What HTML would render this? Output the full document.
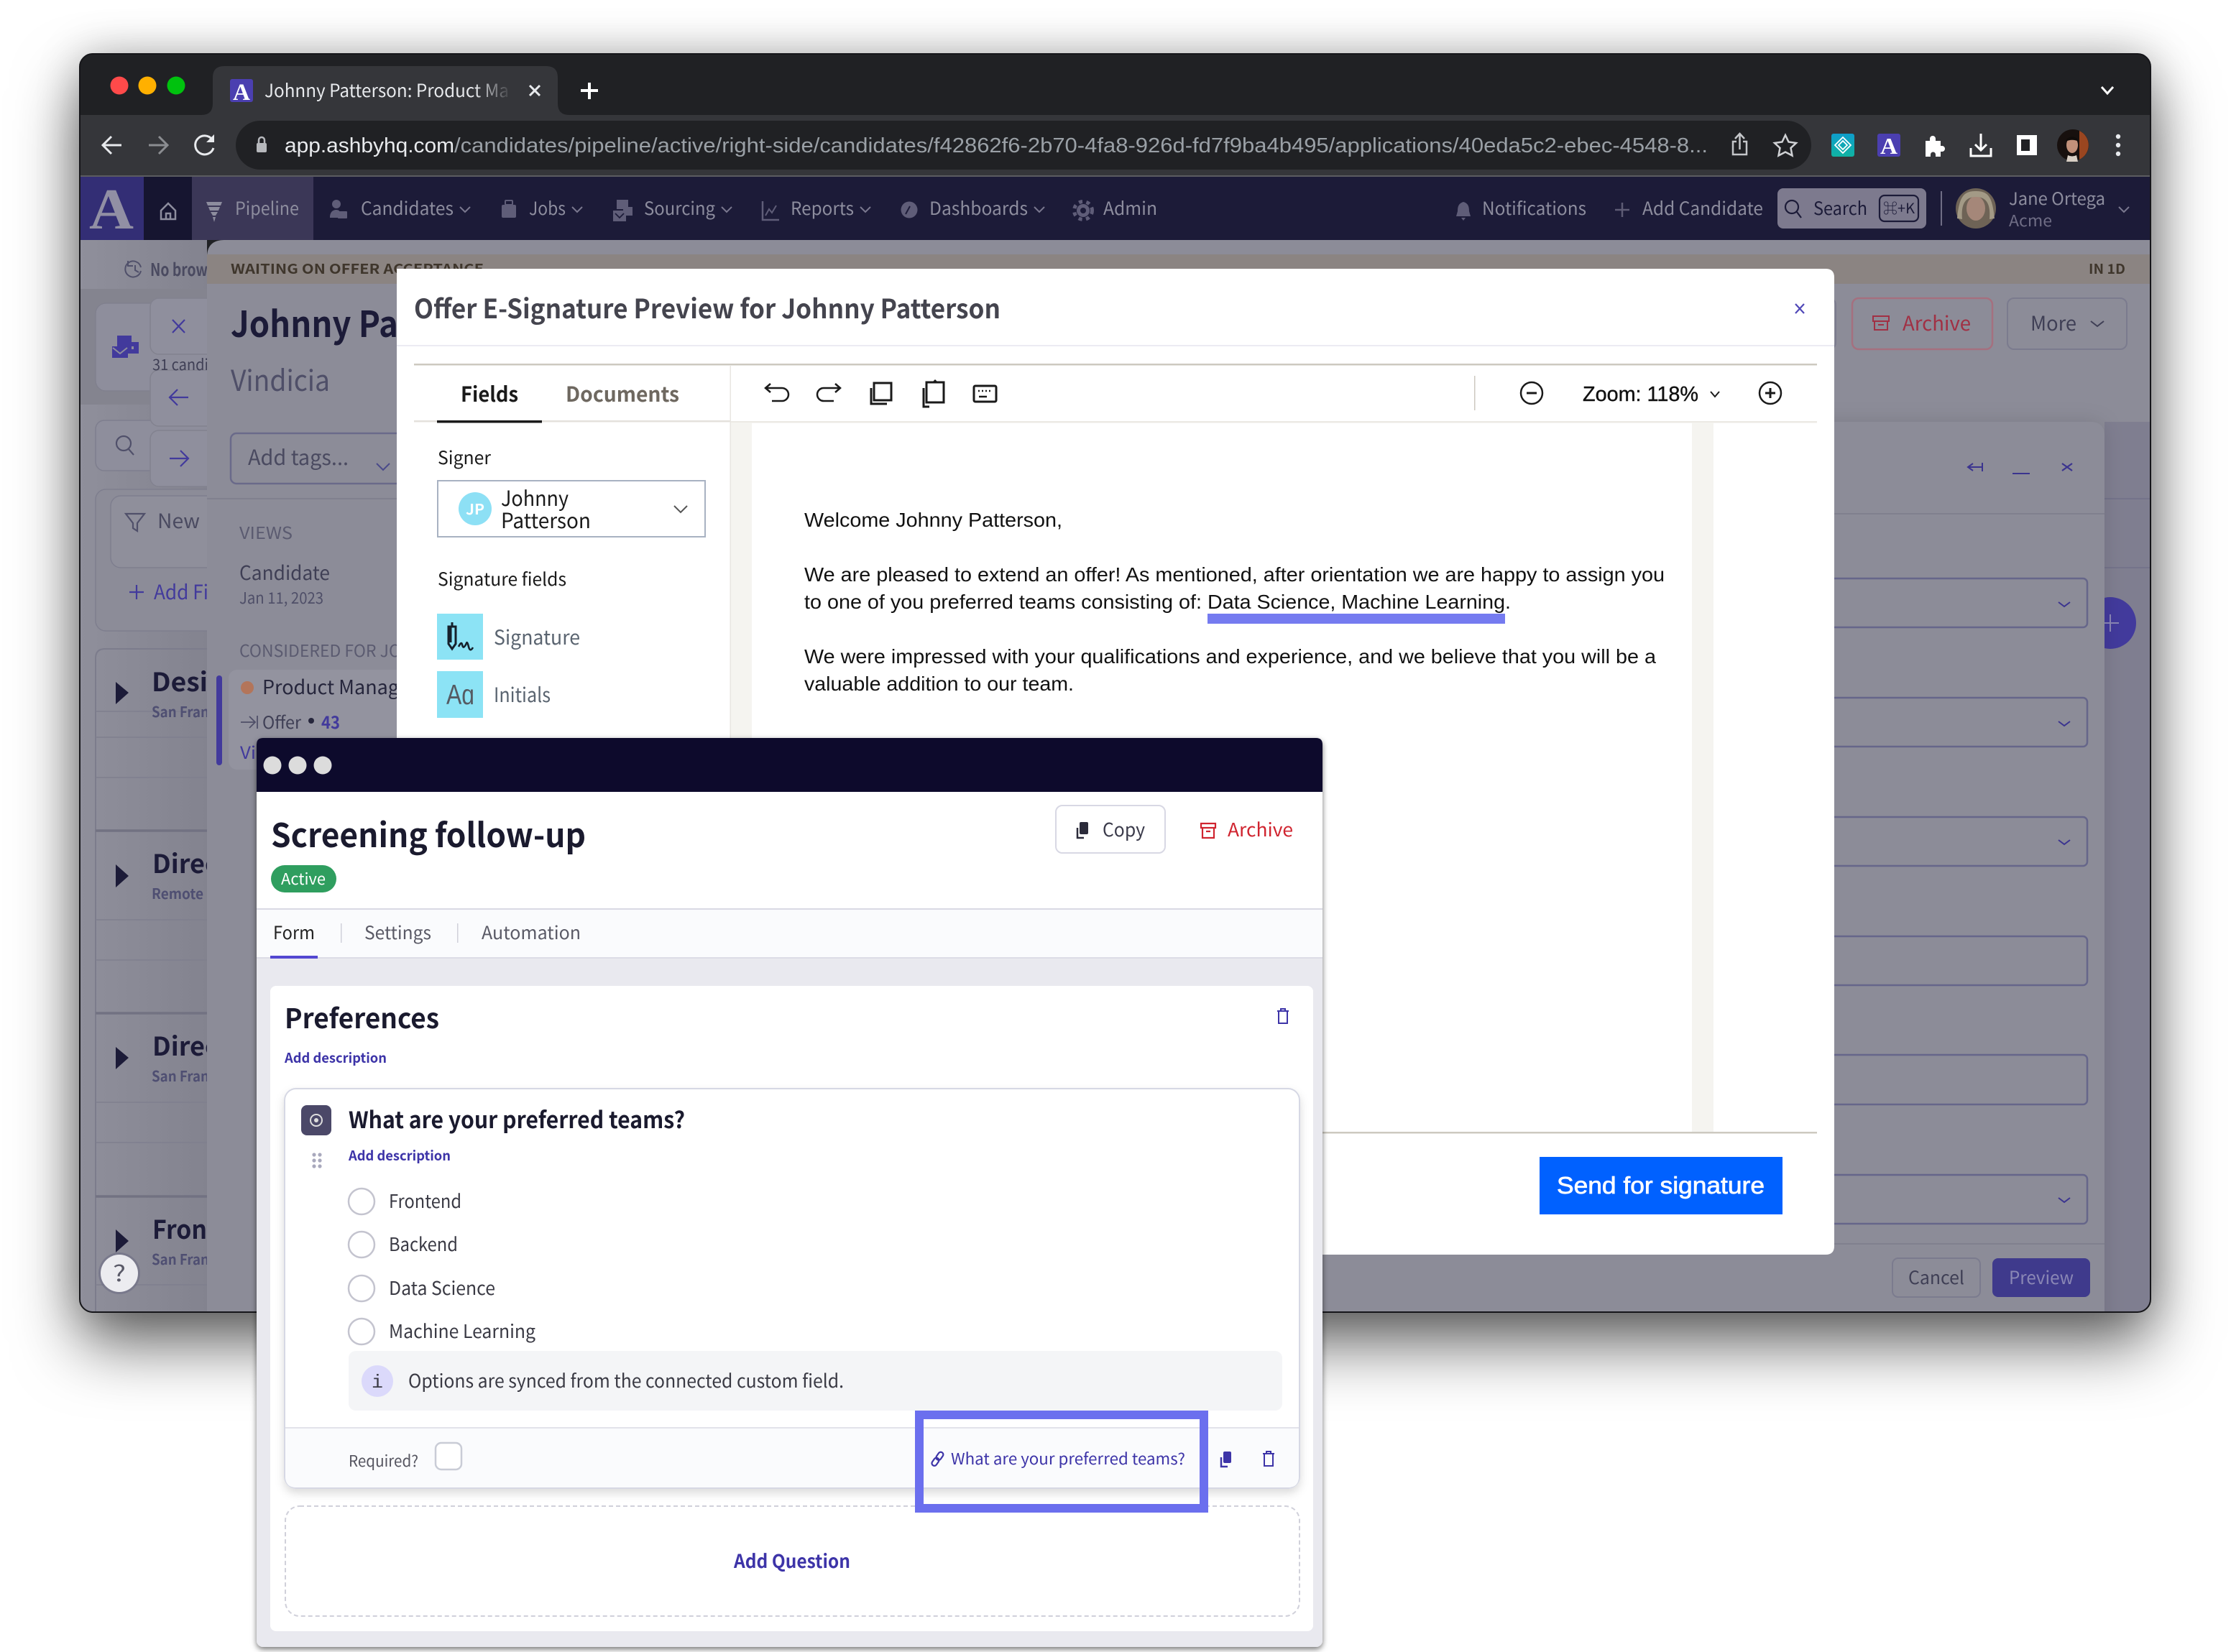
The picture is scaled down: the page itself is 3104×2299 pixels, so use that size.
<!DOCTYPE html>
<html lang="en"><head><meta charset="utf-8"><title>Ashby</title>
<style>
html,body{margin:0;padding:0;background:#fff}
body{width:3104px;height:2299px;position:relative;overflow:hidden}
#sh{position:absolute;left:111px;top:75px;width:2881px;height:1751px;border-radius:18px;box-shadow:0 44px 90px rgba(0,0,0,.6),0 0 60px rgba(0,0,0,.22)}
svg{position:absolute;left:0;top:0}
text{font-family:"Noto Sans CJK JP","Liberation Sans",sans-serif;white-space:pre}
.l{font-family:"Liberation Sans",sans-serif}
.s{font-family:"Liberation Serif",serif;font-weight:700}
.b{font-weight:700}
</style></head><body>
<div id="sh"></div>
<svg width="3104" height="2299" viewBox="0 0 3104 2299" xmlns="http://www.w3.org/2000/svg">
<defs>
<clipPath id="w"><rect x="111" y="75" width="2881" height="1751" rx="18"/></clipPath>
<linearGradient id="fade" gradientUnits="userSpaceOnUse" x1="660" y1="0" x2="712" y2="0"><stop offset="0" stop-color="#e8eaed"/><stop offset="1" stop-color="#35363a"/></linearGradient>
<linearGradient id="side" x1="0" y1="0" x2="1" y2="0"><stop offset="0" stop-color="#8f8f9b"/><stop offset="1" stop-color="#83838f"/></linearGradient>
<linearGradient id="teal" x1="0" y1="0" x2="0" y2="1"><stop offset="0" stop-color="#0f9dcb"/><stop offset="1" stop-color="#10b3a2"/></linearGradient>
<filter id="fs" x="-5%" y="-5%" width="110%" height="110%"><feDropShadow dx="0" dy="3" stdDeviation="4" flood-color="#000" flood-opacity=".55"/></filter>
<filter id="qs" x="-5%" y="-5%" width="110%" height="115%"><feDropShadow dx="0" dy="6" stdDeviation="6" flood-color="#000" flood-opacity=".14"/></filter>
<filter id="ps" x="-10%" y="-5%" width="120%" height="110%"><feDropShadow dx="0" dy="0" stdDeviation="14" flood-color="#000" flood-opacity=".12"/></filter>
</defs>

<g clip-path="url(#w)">
<rect x="111" y="75" width="2881" height="1751" fill="#202124"/>
<!-- tab -->
<path d="M280 160q16 0 16-16V108q0-16 16-16H760q16 0 16 16V144q0 16 16 16Z" fill="#35363a"/>
<circle cx="166" cy="119" r="12.5" fill="#ff4a4a"/><circle cx="205" cy="119" r="12.5" fill="#ffb000"/><circle cx="245" cy="119" r="12.5" fill="#00c20e"/>
<rect x="320" y="110" width="32" height="32" rx="3" fill="#4b3fb0"/>
<text class="s" x="324" y="139" font-size="33" textLength="24" lengthAdjust="spacingAndGlyphs" fill="#fff">A</text>
<text x="368" y="135" font-size="25" textLength="340" lengthAdjust="spacingAndGlyphs" fill="url(#fade)">Johnny Patterson: Product Ma</text>
<path d="M737 119l14 14M751 119l-14 14" stroke="#e8eaed" stroke-width="3" fill="none"/>
<path d="M820 115v23M808 126h24" stroke="#fff" stroke-width="4" fill="none"/>
<path d="M2924 121l8 9 8-9" stroke="#fff" stroke-width="3" fill="none"/>
<!-- toolbar -->
<rect x="111" y="160" width="2881" height="84" fill="#35363a"/>
<rect x="111" y="244" width="2881" height="2" fill="#5b5c60"/>
<rect x="328" y="168" width="2192" height="68" rx="34" fill="#202124"/>
<path d="M169 202H143M155 190l-12 12 12 12" stroke="#e8eaed" stroke-width="3" fill="none"/>
<path d="M207 202h26M221 190l12 12-12 12" stroke="#8b8d91" stroke-width="3" fill="none"/>
<path d="M295 194a13 13 0 1 0 2 12" stroke="#e8eaed" stroke-width="3" fill="none"/><path d="M298 187v11h-11z" fill="#e8eaed"/>
<rect x="357" y="199" width="14" height="13" rx="2" fill="#b6b8bc"/><path d="M360 199v-4a4 4 0 0 1 8 0v4" stroke="#b6b8bc" stroke-width="2.5" fill="none"/>
<text class="l" x="396" y="212" font-size="29" textLength="236" lengthAdjust="spacingAndGlyphs" fill="#e8eaed">app.ashbyhq.com</text>
<text class="l" x="632" y="212" font-size="29" textLength="1744" lengthAdjust="spacingAndGlyphs" fill="#9aa0a6">/candidates/pipeline/active/right-side/candidates/f42862f6-2b70-4fa8-926d-fd7f9ba4b495/applications/40eda5c2-ebec-4548-8...</text>
<path d="M2416 197h-5v18h19v-18h-5M2420.500 208v-21M2414 193l6.500-7 6.500 7" stroke="#c4c6c9" stroke-width="2.500" fill="none"/>
<path d="M2484 188l4.500 9.500 10.500 1.500-7.500 7 2 10.500-9.500-5-9.500 5 2-10.500-7.500-7 10.500-1.500z" stroke="#d0d2d5" stroke-width="2.500" fill="none"/>
<rect x="2548" y="186" width="32" height="32" rx="3" fill="url(#teal)"/><path d="M2564 191l11 11-11 11-11-11z M2564 196l6 6-6 6-6-6z" stroke="#fff" stroke-width="1.800" fill="none"/>
<rect x="2612" y="186" width="32" height="32" rx="3" fill="#4b3fb0"/><text class="s" x="2616" y="214" font-size="32" textLength="24" lengthAdjust="spacingAndGlyphs" fill="#fff">A</text>
<path d="M2679 196h6v-3a4 4 0 0 1 8 0v3h7v7h2a4 4 0 0 1 0 8h-2v7h-7v-3a3.500 3.500 0 0 0-7 0v3h-7z" fill="#fff"/>
<path d="M2756 186v22M2748 201l8 8 8-8M2742 206v11h28v-11" stroke="#fff" stroke-width="3" fill="none"/>
<rect x="2806" y="188" width="28" height="28" fill="#fff"/><rect x="2812" y="194" width="12" height="16" fill="#202124"/>
<circle cx="2884" cy="202" r="22" fill="#17100e"/><path d="M2893 182a22 22 0 0 1 0 40z" fill="#9a4620"/><ellipse cx="2883" cy="202" rx="8" ry="11" fill="#c2917a"/><path d="M2874 197c2-9 16-9 18 0-5-3-13-3-18 0z" fill="#100c0a"/><path d="M2877 216q6 3 12 0l2 9h-16z" fill="#d8cfc4"/>
<circle cx="2947" cy="190" r="3.200" fill="#e8eaed"/><circle cx="2947" cy="202" r="3.200" fill="#e8eaed"/><circle cx="2947" cy="214" r="3.200" fill="#e8eaed"/>

<!-- nav -->
<rect x="111" y="246" width="2881" height="88" fill="#1c1b38"/>
<rect x="111" y="246" width="89" height="88" fill="#332e75"/>
<rect x="200" y="246" width="67" height="88" fill="#161530"/>
<rect x="267" y="246" width="169" height="88" fill="#3b3757"/>
<text class="s" x="124" y="318" font-size="80" textLength="62" lengthAdjust="spacingAndGlyphs" fill="#918fa4">A</text>
<path d="M224 293l10-10 10 10v12h-20zM231 305v-8h6v8" stroke="#8d8d9e" stroke-width="2.500" fill="none"/>
<path d="M287 281h22l-2 5h-18zM290 288h16l-2 5h-12zM293 295h10l-3 5h-4zM296 302h4l-2 7z" fill="#8d8d9e"/>
<g fill="#5f5d78">
<circle cx="468" cy="284" r="6"/><path d="M459 303c0-8 4-11 9-11 2 0 3 1 4 1v10z"/><rect x="470" y="294" width="13" height="10" rx="1"/>
<rect x="698" y="285" width="20" height="18" rx="2"/><rect x="703" y="279" width="10" height="6" rx="1" fill="none" stroke="#5f5d78" stroke-width="2"/>
<rect x="858" y="278" width="16" height="13"/><rect x="867" y="288" width="13" height="12"/><path d="M853 293h18v15h-18z"/>
<path d="M1061 280v26h23" fill="none" stroke="#5f5d78" stroke-width="2.500"/><path d="M1065 300l5-9 4 5 6-10" fill="none" stroke="#5f5d78" stroke-width="2"/>
<circle cx="1265" cy="292" r="11.500"/>
<circle cx="1507" cy="293" r="9"/><circle cx="1507" cy="293" r="12.500" fill="none" stroke="#5f5d78" stroke-width="5" stroke-dasharray="5 5.500"/>
<path d="M2036 281c-7 2-8 7-8 13l-2 7h20l-2-7c0-6-1-11-8-13zM2033 303h6l-3 4z"/>
</g>
<path d="M856 297l6 6 6-6" stroke="#1c1b38" stroke-width="1.800" fill="none"/>
<path d="M2257 282v20M2247 292h20" stroke="#5e5c75" stroke-width="2.500"/>
<path d="M1260 298l6-11" stroke="#1c1b38" stroke-width="2"/>
<circle cx="1507" cy="293" r="4" fill="#1c1b38"/>
<g fill="#8d8d9e" font-size="25">
<text x="327" y="299" textLength="89" lengthAdjust="spacingAndGlyphs">Pipeline</text>
<text x="502" y="299" textLength="129" lengthAdjust="spacingAndGlyphs">Candidates</text>
<text x="736" y="299" textLength="51" lengthAdjust="spacingAndGlyphs">Jobs</text>
<text x="896" y="299" textLength="99" lengthAdjust="spacingAndGlyphs">Sourcing</text>
<text x="1100" y="299" textLength="88" lengthAdjust="spacingAndGlyphs">Reports</text>
<text x="1293" y="299" textLength="137" lengthAdjust="spacingAndGlyphs">Dashboards</text>
<text x="1535" y="299" textLength="75" lengthAdjust="spacingAndGlyphs">Admin</text>
<text x="2062" y="299" textLength="145" lengthAdjust="spacingAndGlyphs">Notifications</text>
<text x="2285" y="299" textLength="168" lengthAdjust="spacingAndGlyphs">Add Candidate</text>
<text x="2795" y="285" font-size="24" textLength="134" lengthAdjust="spacingAndGlyphs">Jane Ortega</text>
<text x="2795" y="315" font-size="22" textLength="60" lengthAdjust="spacingAndGlyphs" fill="#6f6d85">Acme</text>
</g>
<g stroke="#7a788f" stroke-width="2" fill="none">
<path d="M640 288l7 7 7-7M796 288l7 7 7-7M1004 288l7 7 7-7M1197 288l7 7 7-7M1439 288l7 7 7-7M2948 288l7 7 7-7"/>
</g>
<rect x="2473" y="262" width="207" height="56" rx="8" fill="#7d7a8e"/>
<circle cx="2493" cy="288" r="9" stroke="#1c1b38" stroke-width="2.200" fill="none"/><path d="M2500 295l6 8" stroke="#1c1b38" stroke-width="2.200"/>
<text x="2523" y="299" font-size="25" textLength="75" lengthAdjust="spacingAndGlyphs" fill="#1c1b38">Search</text>
<rect x="2615" y="272" width="54" height="36" rx="7" fill="none" stroke="#1c1b38" stroke-width="2.200"/>
<text x="2620" y="297" font-size="20" textLength="44" lengthAdjust="spacingAndGlyphs" fill="#1c1b38">⌘+K</text>
<rect x="2700" y="266" width="2" height="48" fill="#6f6d85"/>
<ellipse cx="2749" cy="290" rx="28" ry="28" fill="#6e6356"/><ellipse cx="2749" cy="290" rx="13" ry="17" fill="#a58779"/><path d="M2723 304c3-32 10-38 26-38s23 6 26 38l-7 1c2-22-5-31-19-31s-21 9-19 31z" fill="#a39a86"/>

<!-- page bg -->
<rect x="111" y="334" width="177" height="1492" fill="url(#side)"/>
<rect x="111" y="402" width="177" height="161" fill="#84848f"/>
<path d="M196 372a11 11 0 1 0 0 5M178 363v7h7M188 369v7l5 3" stroke="#50506a" stroke-width="2" fill="none"/>
<text x="209" y="384" font-size="24" font-weight="700" textLength="80" lengthAdjust="spacingAndGlyphs" fill="#4a4a60">No brow</text>
<rect x="133" y="422" width="200" height="122" rx="14" fill="#8e8e9c" stroke="#80808e" stroke-width="1.500"/>
<g fill="#423a9c"><rect x="163" y="467" width="20" height="15"/><rect x="175" y="476" width="18" height="16"/><path d="M156 482h22v16h-22z"/></g>
<path d="M157 484l10 8 10-8" stroke="#8e8e9c" stroke-width="2" fill="none"/><rect x="183" y="482" width="3" height="4" fill="#8e8e9c"/>
<rect x="133" y="585" width="200" height="70" rx="12" fill="#8e8e9c" stroke="#7e7e8e" stroke-width="1.500"/>
<circle cx="172" cy="617" r="10" stroke="#50506a" stroke-width="2.200" fill="none"/><path d="M179 625l7 8" stroke="#50506a" stroke-width="2.200"/>
<rect x="209" y="415" width="200" height="78" rx="12" fill="#8f8f9d" stroke="#82828f" stroke-width="1.500"/>
<rect x="209" y="515" width="200" height="78" rx="12" fill="#8f8f9d" stroke="#82828f" stroke-width="1.500"/>
<rect x="209" y="599" width="200" height="78" rx="12" fill="#8f8f9d" stroke="#82828f" stroke-width="1.500"/>
<path d="M240 445l17 18M257 445l-17 18" stroke="#423a9c" stroke-width="2.200"/>
<path d="M262 553h-26M247 542l-11 11 11 11M236 638h26M251 627l11 11-11 11" stroke="#423a9c" stroke-width="2.200" fill="none"/>
<text x="212" y="515" font-size="21" textLength="78" lengthAdjust="spacingAndGlyphs" fill="#3f3f55">31 candi</text>
<rect x="133" y="681" width="200" height="197" rx="14" fill="#8c8c98" stroke="#7e7e8e" stroke-width="1.500"/>
<rect x="154" y="690" width="200" height="100" rx="14" fill="#8f8f9b" stroke="#7e7e8e" stroke-width="1.500"/>
<path d="M175 715h26l-10 13v11l-6-4v-7z" stroke="#50506a" stroke-width="2.200" fill="none"/>
<text x="219" y="735" font-size="28" textLength="59" lengthAdjust="spacingAndGlyphs" fill="#4a4a60">New</text>
<path d="M190 814v20M180 824h20" stroke="#423a9c" stroke-width="2.200"/>
<text x="214" y="834" font-size="28" textLength="76" lengthAdjust="spacingAndGlyphs" fill="#423a9c">Add Fi</text>
<path d="M133 1826V916q0-13 13-13H288" fill="none" stroke="#7c7c8c" stroke-width="2"/>
<g stroke="#7f7f8e" stroke-width="1.500">
<path d="M133 990H288M133 1026H288M133 1082H288M133 1280H288M133 1336H288M133 1534H288M133 1590H288M133 1788H288"/>
</g>
<g stroke="#727282" stroke-width="3.500"><path d="M133 1156H288M133 1410H288M133 1665H288"/></g>
<g fill="#1c1b38">
<path d="M161 949l18 15-18 16zM161 1203l18 16-18 16zM161 1457l18 15-18 16zM161 1711l18 16-18 16z"/>
</g>
<g fill="#1c1b38" font-size="36" font-weight="700">
<text x="211" y="962" textLength="78" lengthAdjust="spacingAndGlyphs">Desi</text>
<text x="212" y="1215" textLength="92" lengthAdjust="spacingAndGlyphs">Direc</text>
<text x="212" y="1469" textLength="92" lengthAdjust="spacingAndGlyphs">Direc</text>
<text x="212" y="1724" textLength="76" lengthAdjust="spacingAndGlyphs">Fron</text>
</g>
<g fill="#4f4f72" font-size="20" font-weight="700">
<text x="211" y="998" textLength="80" lengthAdjust="spacingAndGlyphs">San Fran</text>
<text x="211" y="1251" textLength="72" lengthAdjust="spacingAndGlyphs">Remote</text>
<text x="211" y="1505" textLength="80" lengthAdjust="spacingAndGlyphs">San Fran</text>
<text x="211" y="1760" textLength="80" lengthAdjust="spacingAndGlyphs">San Fran</text>
</g>
<circle cx="166" cy="1772" r="29" fill="#6c6c84" opacity=".55"/>
<circle cx="166" cy="1772" r="26" fill="#ececf0"/>
<text x="157" y="1783" font-size="31" textLength="18" lengthAdjust="spacingAndGlyphs" fill="#5a5a68">?</text>

<!-- panel 2 -->
<path d="M288 1826V358q0-24 24-24H2992V1826Z" fill="#8c8c98"/>
<rect x="288" y="354" width="2704" height="41" fill="#8b8482"/>
<text x="321" y="381" font-size="19" font-weight="700" textLength="352" lengthAdjust="spacingAndGlyphs" fill="#3f362c">WAITING ON OFFER ACCEPTANCE</text>
<text x="2906" y="381" font-size="19" font-weight="700" textLength="51" lengthAdjust="spacingAndGlyphs" fill="#3f362c">IN 1D</text>
<text x="321" y="469" font-size="50" font-weight="700" textLength="233" lengthAdjust="spacingAndGlyphs" fill="#1c1b38">Johnny Pa</text>
<text x="321" y="544" font-size="40" textLength="138" lengthAdjust="spacingAndGlyphs" fill="#4f4f68">Vindicia</text>
<rect x="321" y="603" width="260" height="70" rx="8" fill="none" stroke="#6a6a8a" stroke-width="2.500"/>
<text x="345" y="647" font-size="29" textLength="140" lengthAdjust="spacingAndGlyphs" fill="#4a4a60">Add tags...</text>
<path d="M524 645l9 9 9-9" stroke="#4a4a8a" stroke-width="2" fill="none"/>
<rect x="288" y="693" width="270" height="2" fill="#80808e"/>
<text x="333" y="750" font-size="23" textLength="74" lengthAdjust="spacingAndGlyphs" fill="#5b5b70">VIEWS</text>
<text x="333" y="807" font-size="27" textLength="126" lengthAdjust="spacingAndGlyphs" fill="#3f3f55">Candidate</text>
<text x="333" y="840" font-size="22" textLength="117" lengthAdjust="spacingAndGlyphs" fill="#4f4f68">Jan 11, 2023</text>
<text x="333" y="914" font-size="23" textLength="225" lengthAdjust="spacingAndGlyphs" fill="#5b5b70">CONSIDERED FOR JO</text>
<rect x="301" y="940" width="8" height="125" rx="4" fill="#423a9c"/>
<rect x="318" y="932" width="260" height="139" rx="12" fill="#93939f"/>
<circle cx="344" cy="957" r="9" fill="#b3755a"/>
<text x="365" y="966" font-size="27" textLength="190" lengthAdjust="spacingAndGlyphs" fill="#26263c">Product Manag</text>
<path d="M335 1005h20M347 997l8 8-8 8M358 996v18" stroke="#4f4f68" stroke-width="1.800" fill="none"/>
<text x="365" y="1014" font-size="24" textLength="54" lengthAdjust="spacingAndGlyphs" fill="#3f3f55">Offer</text>
<circle cx="433" cy="1003" r="4" fill="#26263c"/>
<text x="447" y="1014" font-size="24" font-weight="700" textLength="26" lengthAdjust="spacingAndGlyphs" fill="#423a9c">43</text>
<text x="334" y="1056" font-size="24" textLength="22" lengthAdjust="spacingAndGlyphs" fill="#423a9c">Vi</text>

<!-- top right btns -->
<rect x="2520" y="415" width="34" height="71" rx="9" fill="none" stroke="#7b7b8e" stroke-width="2"/>
<rect x="2577" y="415" width="195" height="71" rx="9" fill="none" stroke="#a5707f" stroke-width="2.500"/>
<path d="M2606 440h22v7h-22zM2608 447v12h18v-12M2613 452h8" stroke="#a13044" stroke-width="2" fill="none"/>
<text x="2647" y="460" font-size="28" textLength="95" lengthAdjust="spacingAndGlyphs" fill="#a13044">Archive</text>
<rect x="2793" y="415" width="166" height="71" rx="9" fill="none" stroke="#7b7b8e" stroke-width="2"/>
<text x="2825" y="460" font-size="28" textLength="64" lengthAdjust="spacingAndGlyphs" fill="#3f3f55">More</text>
<path d="M2909 447l9 7 9-7" stroke="#3f3f55" stroke-width="2" fill="none"/>

<!-- side panel -->
<rect x="2928" y="587" width="64" height="1239" fill="#7f7e90"/>
<rect x="2928" y="693" width="64" height="2" fill="#74738a"/><rect x="2928" y="789" width="64" height="2" fill="#74738a"/>
<circle cx="2936" cy="867" r="36" fill="#423a9c"/>
<path d="M2936 855v24M2924 867h24" stroke="#8a87b5" stroke-width="2"/>
<path d="M1700 1850V587H2908q20 0 20 20V1850Z" fill="#8c8c98" filter="url(#ps)"/>
<path d="M2758 650h-20M2745 645l-7 5 7 5M2758 644v12" stroke="#3b348f" stroke-width="2" fill="none"/>
<path d="M2800 659h24" stroke="#3b348f" stroke-width="2"/>
<path d="M2869 645l14 10M2883 645l-14 10" stroke="#3b348f" stroke-width="2.200"/>
<rect x="2500" y="714" width="428" height="2" fill="#80808e"/>
<g fill="none" stroke="#66668a" stroke-width="2.500">
<rect x="2400" y="805" width="504" height="68" rx="6"/><rect x="2400" y="971" width="504" height="68" rx="6"/><rect x="2400" y="1137" width="504" height="68" rx="6"/><rect x="2400" y="1303" width="504" height="68" rx="6"/><rect x="2400" y="1468" width="504" height="69" rx="6"/><rect x="2400" y="1635" width="504" height="68" rx="6"/>
</g>
<g fill="none" stroke="#3b348f" stroke-width="2"><path d="M2864 838l8 6 8-6M2864 1004l8 6 8-6M2864 1169l8 6 8-6M2864 1667l8 6 8-6"/></g>
<rect x="2500" y="1730" width="428" height="2" fill="#80808e"/>
<rect x="2633" y="1751" width="122" height="54" rx="8" fill="none" stroke="#7b7b8e" stroke-width="2"/>
<text x="2655" y="1787" font-size="25" textLength="78" lengthAdjust="spacingAndGlyphs" fill="#3f3f55">Cancel</text>
<rect x="2772" y="1751" width="136" height="54" rx="8" fill="#3f3a8c"/>
<text x="2795" y="1787" font-size="25" textLength="90" lengthAdjust="spacingAndGlyphs" fill="#8a87b5">Preview</text>
</g>
<rect x="111" y="75" width="2881" height="1751" rx="18" fill="none" stroke="#16161a" stroke-width="2"/>

<!-- modal -->
<path d="M552 374H2540q12 0 12 12V1734q0 12-12 12H552Z" fill="#fff"/>
<text x="576" y="443" font-size="37" font-weight="700" textLength="816" lengthAdjust="spacingAndGlyphs" fill="#44444e">Offer E-Signature Preview for Johnny Patterson</text>
<path d="M2498 423l12 13M2510 423l-12 13" stroke="#5048b8" stroke-width="2.200"/>
<rect x="552" y="480" width="2000" height="2" fill="#ecebf3"/>
<rect x="576" y="506" width="1952" height="2.500" fill="#cdc9c0"/>
<rect x="576" y="585" width="440" height="2.500" fill="#e4e1dc"/>
<rect x="1016" y="586" width="1512" height="2.500" fill="#ece9e4"/>
<rect x="608" y="585" width="146" height="3.500" fill="#1a1a1a"/>
<rect x="1015.500" y="508" width="1.500" height="520" fill="#e8e6e1"/>
<text x="641" y="559" font-size="29" font-weight="700" textLength="80" lengthAdjust="spacingAndGlyphs" fill="#1a1a1a">Fields</text>
<text x="787" y="559" font-size="29" font-weight="700" textLength="158" lengthAdjust="spacingAndGlyphs" fill="#6e6860">Documents</text>
<g fill="none" stroke="#1a1a1a" stroke-width="2.500">
<path d="M1072 534l-7 6 7 6M1065 540H1088a9 9 0 0 1 0 18H1074"/>
<path d="M1162 534l7 6-7 6M1169 540H1146a9 9 0 0 0 0 18H1160"/>
<rect x="1216" y="533" width="24" height="24" stroke-width="3"/><path d="M1212 540v22h22" stroke-width="3"/>
<rect x="1289" y="532" width="24" height="28" stroke-width="3"/><path d="M1285 540v26h8" stroke-width="3"/>
<rect x="1355" y="537" width="31" height="22" rx="2" stroke-width="3"/>
<circle cx="2131" cy="547" r="15"/><path d="M2124 547h14" stroke-width="3"/>
<circle cx="2463" cy="547" r="15"/><path d="M2456 547h14M2463 540v14" stroke-width="3"/>
<path d="M2380 545l6 7 6-7" stroke-width="2"/>
</g>
<path d="M1296 533l5-5 5 5z" fill="#1a1a1a"/>
<path d="M1361 544h2M1366 544h2M1371 544h2M1376 544h2M1362 552h11" stroke="#1a1a1a" stroke-width="2.500"/>
<rect x="2051" y="523" width="1.500" height="48" fill="#cdc9c0"/>
<text class="l" x="2202" y="558" font-size="29" textLength="161" lengthAdjust="spacingAndGlyphs" fill="#111" stroke="#111" stroke-width=".4">Zoom: 118%</text>
<rect x="1017" y="588" width="29" height="988" fill="#f5f4f0"/>
<rect x="2354" y="588" width="30" height="988" fill="#f5f4f0"/>
<rect x="1016" y="1575" width="1512" height="2.500" fill="#cdc9c0"/>
<text x="609" y="646" font-size="25" textLength="74" lengthAdjust="spacingAndGlyphs" fill="#1a1a1a">Signer</text>
<rect x="609" y="669" width="372" height="78" fill="none" stroke="#a8b2c2" stroke-width="2"/>
<circle cx="661" cy="708" r="23" fill="#8de0f5"/>
<text x="648" y="716" font-size="20" font-weight="700" textLength="26" lengthAdjust="spacingAndGlyphs" fill="#fff">JP</text>
<text x="697" y="704" font-size="29" textLength="94" lengthAdjust="spacingAndGlyphs" fill="#1a1a1a">Johnny</text>
<text x="697" y="735" font-size="29" textLength="125" lengthAdjust="spacingAndGlyphs" fill="#1a1a1a">Patterson</text>
<path d="M938 704l9 9 9-9" stroke="#555" stroke-width="2" fill="none"/>
<text x="609" y="815" font-size="25" textLength="179" lengthAdjust="spacingAndGlyphs" fill="#1a1a1a">Signature fields</text>
<rect x="608" y="854" width="64" height="64" fill="#8ce3f5"/>
<path d="M624 872h10v24l-5 7-5-7zM629 866v6M627 872v22" stroke="#16212c" stroke-width="3" fill="none"/>
<path d="M638 900q4-8 5-3t3 3 3-5 3 5 6 1" stroke="#16212c" stroke-width="2.600" fill="none"/>
<text x="687" y="897" font-size="28" textLength="120" lengthAdjust="spacingAndGlyphs" fill="#5a6470">Signature</text>
<rect x="608" y="934" width="64" height="65" fill="#8ce3f5"/>
<text class="l" x="621" y="980" font-size="39" textLength="39" lengthAdjust="spacingAndGlyphs" fill="#555b63">Aɑ</text>
<text x="687" y="977" font-size="28" textLength="79" lengthAdjust="spacingAndGlyphs" fill="#5a6470">Initials</text>
<g class="l" fill="#111">
<text class="l" x="1119" y="733" font-size="28" textLength="359" lengthAdjust="spacingAndGlyphs">Welcome Johnny Patterson,</text>
<text class="l" x="1119" y="809" font-size="28" textLength="1197" lengthAdjust="spacingAndGlyphs">We are pleased to extend an offer! As mentioned, after orientation we are happy to assign you</text>
<text class="l" x="1119" y="847" font-size="28" textLength="553" lengthAdjust="spacingAndGlyphs">to one of you preferred teams consisting of:</text>
<text class="l" x="1680" y="847" font-size="28" textLength="422" lengthAdjust="spacingAndGlyphs">Data Science, Machine Learning.</text>
<text class="l" x="1119" y="923" font-size="28" textLength="1185" lengthAdjust="spacingAndGlyphs">We were impressed with your qualifications and experience, and we believe that you will be a</text>
<text class="l" x="1119" y="961" font-size="28" textLength="375" lengthAdjust="spacingAndGlyphs">valuable addition to our team.</text>
</g>
<rect x="1680" y="854" width="414" height="14" fill="#757bf0"/>
<rect x="2142" y="1610" width="338" height="80" fill="#0061ff"/>
<text class="l" x="2166" y="1661" font-size="33" textLength="289" lengthAdjust="spacingAndGlyphs" fill="#fff" stroke="#fff" stroke-width=".7">Send for signature</text>

<!-- form window -->
<rect x="357" y="1027" width="1483" height="1265" rx="9" fill="#e9e9ef" filter="url(#fs)"/>
<path d="M357 1102V1036q0-9 9-9H1831q9 0 9 9V1102Z" fill="#0d0a2c"/>
<circle cx="379" cy="1065" r="12.500" fill="#dcdcdc"/><circle cx="414" cy="1065" r="12.500" fill="#dcdcdc"/><circle cx="449" cy="1065" r="12.500" fill="#dcdcdc"/>
<rect x="357" y="1102" width="1483" height="163" fill="#fff"/>
<text x="377" y="1179" font-size="46" font-weight="700" textLength="438" lengthAdjust="spacingAndGlyphs" fill="#1a1a2e">Screening follow-up</text>
<rect x="377" y="1204" width="91" height="38" rx="19" fill="#2f9e5f"/>
<text x="391" y="1231" font-size="22" textLength="62" lengthAdjust="spacingAndGlyphs" fill="#fff">Active</text>
<rect x="1469" y="1121" width="152" height="66" rx="9" fill="#fff" stroke="#d8d8e4" stroke-width="2"/>
<rect x="1502" y="1144" width="12" height="17" rx="2" fill="#2b2b3a"/><path d="M1499 1152v14h9" stroke="#2b2b3a" stroke-width="2.500" fill="none"/>
<text x="1534" y="1164" font-size="26" textLength="59" lengthAdjust="spacingAndGlyphs" fill="#3a3a4a">Copy</text>
<path d="M1671 1146h20v6h-20zM1673 1152v14h16v-14M1678 1157h6" stroke="#d0242f" stroke-width="2.200" fill="none"/>
<text x="1708" y="1164" font-size="26" textLength="91" lengthAdjust="spacingAndGlyphs" fill="#d0242f">Archive</text>
<rect x="357" y="1264" width="1483" height="2.500" fill="#d9d9e4"/>
<rect x="357" y="1266" width="1483" height="66" fill="#fafbfd"/>
<rect x="357" y="1332" width="1483" height="2" fill="#dcdce6"/>
<text x="380" y="1307" font-size="25" textLength="58" lengthAdjust="spacingAndGlyphs" fill="#222">Form</text>
<rect x="376" y="1330" width="66" height="4" fill="#5347d1"/>
<rect x="474" y="1285" width="1.500" height="27" fill="#d0d0da"/>
<text x="507" y="1307" font-size="25" textLength="93" lengthAdjust="spacingAndGlyphs" fill="#5a5a66">Settings</text>
<rect x="636" y="1285" width="1.500" height="27" fill="#d0d0da"/>
<text x="670" y="1307" font-size="25" textLength="138" lengthAdjust="spacingAndGlyphs" fill="#5a5a66">Automation</text>

<rect x="376" y="1372" width="1451" height="898" rx="8" fill="#fff"/>
<text x="396" y="1431" font-size="38" font-weight="700" textLength="215" lengthAdjust="spacingAndGlyphs" fill="#1a1a2e">Preferences</text>
<path d="M1777 1407h16M1779 1407v17h12v-17M1782 1407v-3h6v3" stroke="#3d34a8" stroke-width="2" fill="none"/>
<text x="396" y="1479" font-size="19" font-weight="700" textLength="142" lengthAdjust="spacingAndGlyphs" fill="#3d34a8">Add description</text>

<rect x="396" y="1515" width="1412" height="556" rx="16" fill="#fff" stroke="#d6d8e4" stroke-width="2" filter="url(#qs)"/>
<path d="M397 1987H1807V2055q0 15-15 15H412q-15 0-15-15Z" fill="#fafbfd"/>
<rect x="397" y="1986" width="1410" height="2" fill="#e2e3ea"/>
<rect x="419" y="1538" width="42" height="42" rx="8" fill="#4b4868"/>
<circle cx="440" cy="1559" r="8" fill="none" stroke="#ddd" stroke-width="2"/><circle cx="440" cy="1559" r="3" fill="#ddd"/>
<text x="485" y="1570" font-size="32" font-weight="700" textLength="468" lengthAdjust="spacingAndGlyphs" fill="#1a1a2e">What are your preferred teams?</text>
<g fill="#a9a9bd"><circle cx="437" cy="1607" r="2.600"/><circle cx="445" cy="1607" r="2.600"/><circle cx="437" cy="1615" r="2.600"/><circle cx="445" cy="1615" r="2.600"/><circle cx="437" cy="1623" r="2.600"/><circle cx="445" cy="1623" r="2.600"/></g>
<text x="485" y="1615" font-size="19" font-weight="700" textLength="142" lengthAdjust="spacingAndGlyphs" fill="#3d34a8">Add description</text>
<g fill="#fff" stroke="#c4c4cf" stroke-width="2.500"><circle cx="503" cy="1672" r="18"/><circle cx="503" cy="1732" r="18"/><circle cx="503" cy="1793" r="18"/><circle cx="503" cy="1853" r="18"/></g>
<g fill="#3a3a44" font-size="26">
<text x="541" y="1681" textLength="101" lengthAdjust="spacingAndGlyphs">Frontend</text>
<text x="541" y="1741" textLength="96" lengthAdjust="spacingAndGlyphs">Backend</text>
<text x="541" y="1802" textLength="148" lengthAdjust="spacingAndGlyphs">Data Science</text>
<text x="541" y="1862" textLength="204" lengthAdjust="spacingAndGlyphs">Machine Learning</text>
</g>
<rect x="485" y="1880" width="1299" height="83" rx="10" fill="#f4f5f7"/>
<circle cx="525" cy="1922" r="22" fill="#dbd9fb"/>
<text x="517" y="1931" font-size="26" textLength="16" lengthAdjust="spacingAndGlyphs" fill="#3a3a44" style="font-family:'Liberation Mono',monospace">i</text>
<text x="568" y="1931" font-size="26" textLength="606" lengthAdjust="spacingAndGlyphs" fill="#3a3a44">Options are synced from the connected custom field.</text>
<text x="485" y="2041" font-size="22" textLength="97" lengthAdjust="spacingAndGlyphs" fill="#555560">Required?</text>
<rect x="606" y="2008" width="36" height="37" rx="8" fill="#fff" stroke="#c9ccd6" stroke-width="2.500"/>
<g fill="none" stroke="#3d34a8" stroke-width="2.200"><rect x="1304" y="2020" width="7" height="12" rx="3.500" transform="rotate(35 1307 2026)"/><rect x="1298" y="2028" width="7" height="12" rx="3.500" transform="rotate(35 1301 2034)"/></g>
<text x="1323" y="2038" font-size="22" textLength="326" lengthAdjust="spacingAndGlyphs" fill="#3d34a8">What are your preferred teams?</text>
<rect x="1702" y="2020" width="11" height="16" rx="2" fill="#3d34a8"/><path d="M1699 2028v13h9" stroke="#3d34a8" stroke-width="2.500" fill="none"/>
<path d="M1757 2023h16M1759 2023v17h12v-17M1762 2023v-3h6v3" stroke="#3d34a8" stroke-width="2" fill="none"/>
<rect x="397" y="2096" width="1411" height="153" rx="20" fill="#fff" stroke="#d0d0da" stroke-width="2" stroke-dasharray="6 4"/>
<text x="1021" y="2182" font-size="26" font-weight="700" textLength="162" lengthAdjust="spacingAndGlyphs" fill="#3d34a8">Add Question</text>
<rect x="1279" y="1969" width="396" height="130" fill="none" stroke="#6b6fee" stroke-width="12"/>
</svg>
</body></html>
